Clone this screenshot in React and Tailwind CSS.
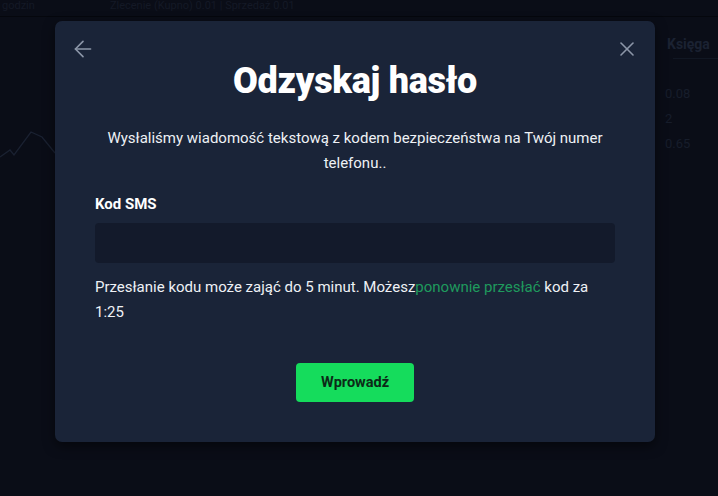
import { ArrowLeft, X } from 'lucide-react';

function Backdrop() {
  return (
    <div className="flex h-full w-full flex-col">
      <div className="flex h-[17px] items-start gap-[75px] border-b border-[#05070d] pl-[2px] text-[11px] leading-[12px] text-[#141926]">
        <span>godzin</span>
        <span>Zlecenie (Kupno) 0.01 | Sprzedaż 0.01</span>
      </div>
      <div className="flex flex-1">
        <div className="flex-1 pt-[96px]">
          <svg width="60" height="50" viewBox="0 0 60 50" fill="none">
            <path d="M0 44 L10 37 L14 42 L31 19 L42 24 L55 40" stroke="#1a2131" strokeWidth="1.3" />
          </svg>
        </div>
        <div className="flex w-[60px] flex-col pl-[7px] pt-[20px] text-[#171d2b]">
          <span className="pl-[2px] text-[14px] font-bold leading-[14px] text-[#1b2232]">Księga</span>
          <div className="mt-[7px] ml-[8px] border-t border-[#111723]" />
          <div className="mt-[28px] flex flex-col gap-[11px] text-[13px] leading-[14px]">
            <span>0.08</span>
            <span>2</span>
            <span>0.65</span>
          </div>
        </div>
      </div>
    </div>
  );
}

export default function App() {
  return (
    <div
      className="relative h-[496px] w-full overflow-hidden bg-[#0a0d17] text-white"
      style={{ fontFamily: 'Roboto, "Noto Sans", sans-serif' }}
    >
      <Backdrop />
      <div className="absolute inset-0 pl-[55px] pt-[21px]">
        <div className="relative flex w-[600px] flex-col items-center rounded-[7px] bg-[#1a2438] px-10 pb-10 pt-[40px] shadow-[0_4px_12px_rgba(0,0,0,0.5)]">
          <button className="absolute left-[15px] top-[15px] text-[#8c96a8]">
            <ArrowLeft size={26} strokeWidth={1.5} />
          </button>
          <button className="absolute right-[16px] top-[16px] text-[#8c96a8]">
            <X size={24} strokeWidth={1.6} />
          </button>

          <h1 className="text-[36px] font-black leading-[40px] tracking-[-0.3px] text-white">Odzyskaj hasło</h1>

          <p className="mt-[25px] w-full text-center text-[15px] leading-[25px] text-[#eef1f5]">
            Wysłaliśmy wiadomość tekstową z kodem bezpieczeństwa na Twój numer telefonu..
          </p>

          <div className="mt-[18px] w-full">
            <label className="block text-[15px] font-bold leading-[20px] text-white">Kod SMS</label>
            <input
              type="text"
              className="mt-[9px] h-[40px] w-full rounded-[4px] bg-[#131a2b] px-3 text-[14px] text-white outline-none"
            />
            <p className="mt-[12px] text-[15px] leading-[25px] text-[#eef1f5]">
              Przesłanie kodu może zająć do 5 minut. Możesz
              <span className="text-[#1f9a5d]">ponownie przesłać</span> kod za 1:25
            </p>
          </div>

          <button className="mt-[38px] h-[39px] w-[118px] rounded-[4px] bg-[#15dc5c] text-[14.5px] font-bold text-[#0c2a17]">
            Wprowadź
          </button>
        </div>
      </div>
    </div>
  );
}
